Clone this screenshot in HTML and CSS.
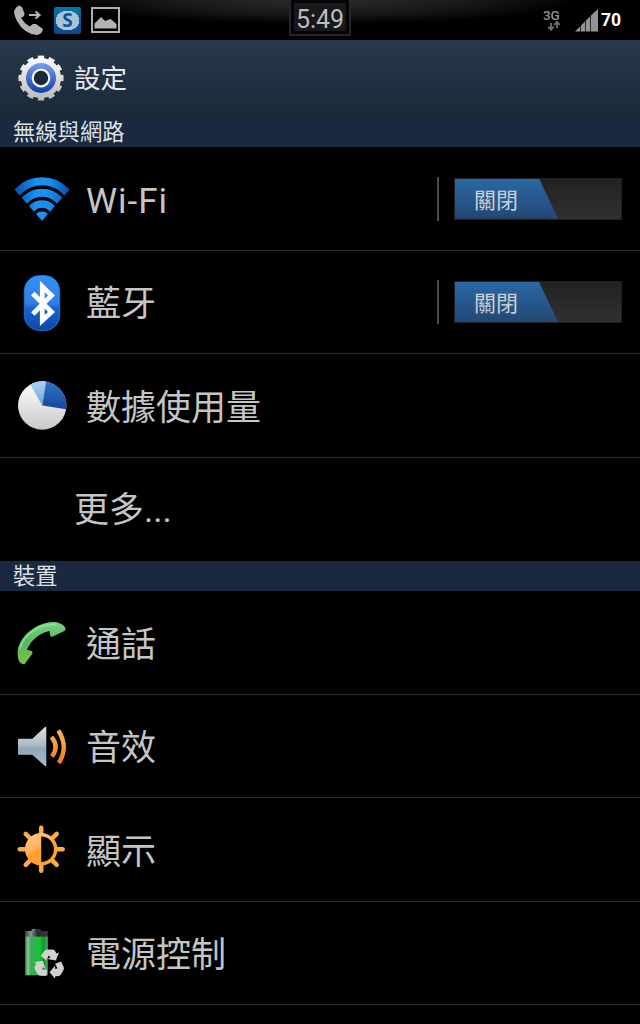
FILE: index.html
```
<!doctype html>
<html lang="zh-Hant">
  <head>
    <meta charset="UTF-8" />
    <meta name="viewport" content="width=device-width, initial-scale=1.0" />
    <title>設定</title>
    <link rel="stylesheet" href="styles.css">
  </head>
  <body>
    <div class="status-bar">
      <div class="notifications">
        <svg width="30" height="32" viewBox="0 0 30 32">
          <path d="M0.500 6 Q2 2.500 5 1.500 L8 3 L10.500 9.500 L10 12 L7 14 Q10 19 15.500 22.500 L19 20 L22 20 L29 25 L28 28 Q26 31 23 31 Q10 30 3 17 Q-1 9 0.500 6Z" fill="#b2b4b2" />
          <path d="M15 11 H25 M21.500 7.500 L25.500 11 L21.500 14.500" fill="none" stroke="#b2b4b2" stroke-width="2.200" />
        </svg>
        <div class="app-badge"><span>S</span></div>
        <svg width="29" height="26" viewBox="0 0 29 26">
          <rect x="1" y="1" width="27" height="24" fill="none" stroke="#aeb0ae" stroke-width="2" />
          <path d="M3.500 21.500 V16.500 L10 10 L14 14 L19.500 12 L25.500 17 V21.500Z" fill="#b2b4b2" />
        </svg>
      </div>
      <div class="clock">5:49</div>
      <div class="indicators">
        <div class="network">
          <span>3G</span>
          <svg width="14" height="10" viewBox="0 0 14 10">
            <path d="M4 2 V8 M1.200 5.500 L4 8.800 L6.800 5.500 M10 7 V1 M7.200 4 L10 0.800 L12.800 4" fill="none" stroke="#707070" stroke-width="1.800" />
          </svg>
        </div>
        <svg class="signal" width="24" height="23" viewBox="0 0 24 23">
          <path d="M0 22.500 L5 17.500 V22.500Z M5.700 22.500 V16.800 L10 12.500 V22.500Z M10.700 22.500 V11.800 L15 7.500 V22.500Z M15.700 22.500 V6.800 L23 0 V22.500Z" fill="#939393" />
        </svg>
        <span class="battery-level">70</span>
      </div>
    </div>

    <header class="header">
      <svg width="48" height="48" viewBox="-24 -24 48 48">
        <defs>
          <linearGradient id="gearBody" x1="0" y1="-22" x2="0" y2="22" gradientUnits="userSpaceOnUse">
            <stop offset="0" stop-color="#fff" />
            <stop offset="1" stop-color="#b9b9b9" />
          </linearGradient>
          <linearGradient id="gearRing" x1="0" y1="-16" x2="0" y2="16" gradientUnits="userSpaceOnUse">
            <stop offset="0" stop-color="#7ba0f5" />
            <stop offset="1" stop-color="#0b3ca4" />
          </linearGradient>
        </defs>
        <circle r="17.200" fill="none" stroke="url(#gearBody)" stroke-width="5.800" />
        <circle r="20.500" fill="none" stroke="url(#gearBody)" stroke-width="4.200" pathLength="120" stroke-dasharray="5.800 4.200" stroke-dashoffset="2.900" />
        <circle r="12" fill="none" stroke="url(#gearRing)" stroke-width="6" />
        <circle r="8.300" fill="#1c2836" stroke="#f4f4f4" stroke-width="2.200" />
      </svg>
      <h1>設定</h1>
    </header>

    <h2 class="category">無線與網路</h2>
    <ul class="list">
      <li class="row">
        <svg class="icon" viewBox="0 0 60 60">
          <defs>
            <linearGradient id="wifiBlue" x1="2" y1="0" x2="58" y2="0" gradientUnits="userSpaceOnUse">
              <stop offset="0" stop-color="#064ba4" />
              <stop offset=".4" stop-color="#1b93f4" />
              <stop offset=".65" stop-color="#168cf0" />
              <stop offset="1" stop-color="#064da8" />
            </linearGradient>
            <clipPath id="wifiWedge"><path d="M30 52.800 L-10 7.500 H70Z" /></clipPath>
          </defs>
          <g clip-path="url(#wifiWedge)" fill="none" stroke="url(#wifiBlue)">
            <circle cx="30" cy="46.500" r="33.300" stroke-width="7.900" />
            <circle cx="30" cy="48.300" r="23.600" stroke-width="8" />
            <circle cx="30" cy="50" r="14" stroke-width="7.600" />
            <circle cx="30" cy="51.700" r="8.300" fill="#1b93f4" stroke="none" />
          </g>
        </svg>
        <span class="label latin">Wi-Fi</span>
        <div class="switch"><span>關閉</span></div>
      </li>
      <li class="row short">
        <svg class="icon" viewBox="0 0 60 60">
          <defs>
            <linearGradient id="btBlue" x1="0" y1="0" x2="0" y2="1">
              <stop offset="0" stop-color="#3491f4" />
              <stop offset=".5" stop-color="#2f80e6" />
              <stop offset=".6" stop-color="#1863cf" />
              <stop offset="1" stop-color="#10479f" />
            </linearGradient>
          </defs>
          <rect x="12.300" y="3.500" width="35.400" height="55" rx="15" fill="url(#btBlue)" stroke="#1e74cf" />
          <path d="M20.800 21.500 L39.500 40 L30.300 48.500 V14.500 L39.500 23.500 L20.800 42" fill="none" stroke="#fff" stroke-width="4.800" />
        </svg>
        <span class="label">藍牙</span>
        <div class="switch"><span>關閉</span></div>
      </li>
      <li class="row">
        <svg class="icon" viewBox="0 0 60 60">
          <defs>
            <linearGradient id="pieGray" x1="0" y1="0" x2="0" y2="1">
              <stop offset="0" stop-color="#fff" />
              <stop offset="1" stop-color="#c9c9c9" />
            </linearGradient>
            <linearGradient id="pieBlue" x1="0" y1="0" x2="0" y2="1">
              <stop offset="0" stop-color="#2f74cc" />
              <stop offset="1" stop-color="#164798" />
            </linearGradient>
            <linearGradient id="pieLight" x1="0" y1="0" x2="0" y2="1">
              <stop offset="0" stop-color="#abd4f3" />
              <stop offset="1" stop-color="#6da0d6" />
            </linearGradient>
          </defs>
          <circle cx="30.200" cy="30.500" r="24.200" fill="url(#pieGray)" />
          <path d="M30.300 30.500 L18.300 9.500 A24.200 24.200 0 0 1 34 6.600Z" fill="url(#pieLight)" />
          <path d="M30.300 30.500 L34 6.600 A24.200 24.200 0 0 1 54.200 34.200Z" fill="url(#pieBlue)" />
        </svg>
        <span class="label">數據使用量</span>
      </li>
      <li class="row short more">
        <span class="label">更多...</span>
      </li>
    </ul>

    <h2 class="category">裝置</h2>
    <ul class="list">
      <li class="row">
        <svg class="icon" viewBox="0 0 60 60">
          <defs>
            <linearGradient id="callGreen" x1="0" y1="0" x2="0" y2="1">
              <stop offset="0" stop-color="#74d380" />
              <stop offset=".5" stop-color="#58b860" />
              <stop offset="1" stop-color="#7fc343" />
            </linearGradient>
          </defs>
          <path d="M6.500 48 Q4 38 8 31 Q12 22.500 21.300 16.500 Q31 10 41.300 10 Q49 10 53.300 15.500 V18.500 Q47 21.500 40 25 L38.300 24 L37.500 19 Q22 22.500 14.800 37.800 L20 39 L20.500 41.500 L12.500 52.300 Q8.500 52.500 6.500 48Z" fill="url(#callGreen)" />
          <path d="M8 37 Q11 25 21 19 Q31 12 44 12.500" fill="none" stroke="#a5e8ac" stroke-width="1.800" opacity=".6" />
        </svg>
        <span class="label">通話</span>
      </li>
      <li class="row short">
        <svg class="icon" viewBox="0 0 60 60">
          <defs>
            <linearGradient id="speaker" x1="0" y1="0" x2="0" y2="1">
              <stop offset="0" stop-color="#dde2e5" />
              <stop offset=".48" stop-color="#aab9c5" />
              <stop offset=".55" stop-color="#91a8b9" />
              <stop offset="1" stop-color="#a9bdcb" />
            </linearGradient>
            <linearGradient id="wave" x1="0" y1="14" x2="0" y2="48" gradientUnits="userSpaceOnUse">
              <stop offset="0" stop-color="#ffb45c" />
              <stop offset="1" stop-color="#f47c12" />
            </linearGradient>
          </defs>
          <path d="M7 22.700 H20.300 L33 11 Q34.300 10.200 34.300 12 V49.500 Q34.300 51 33 50 L20.300 38.800 H7 Q6 38.800 6 37.500 V24 Q6 22.700 7 22.700Z" fill="url(#speaker)" />
          <path d="M39.500 21 Q47.500 30.500 40 40.500 M46.300 14.500 Q57 31 46.800 47" fill="none" stroke="url(#wave)" stroke-width="4.400" />
        </svg>
        <span class="label">音效</span>
      </li>
      <li class="row">
        <svg class="icon" viewBox="0 0 60 60">
          <defs>
            <linearGradient id="sun" x1="10" y1="8" x2="35" y2="54" gradientUnits="userSpaceOnUse">
              <stop offset="0" stop-color="#ffce94" />
              <stop offset=".45" stop-color="#ffb560" />
              <stop offset=".55" stop-color="#ffa031" />
              <stop offset="1" stop-color="#ffa336" />
            </linearGradient>
          </defs>
          <g transform="translate(29.200 30.300)" stroke="#ffaa48" stroke-width="4.500" stroke-linecap="round">
            <path d="M0 -21.500 V-16 M0 21.500 V16 M-21.500 0 H-16 M21.500 0 H16 M-15.500 -15.500 L-11 -11 M15.500 -15.500 L11 -11 M-15.500 15.500 L-11 11 M15.500 15.500 L11 11" />
          </g>
          <circle cx="29.200" cy="30.300" r="14.500" fill="#000" stroke="url(#sun)" stroke-width="3.500" />
          <path d="M29.200 15.500 A14.800 14.800 0 0 0 29.200 45.100Z" fill="url(#sun)" />
        </svg>
        <span class="label">顯示</span>
      </li>
      <li class="row short">
        <svg class="icon" viewBox="0 0 60 60">
          <defs>
            <linearGradient id="cell" x1="0" y1="0" x2="1" y2="0">
              <stop offset="0" stop-color="#157334" />
              <stop offset=".12" stop-color="#8fc79c" />
              <stop offset=".25" stop-color="#3faa5c" />
              <stop offset=".65" stop-color="#12c436" />
              <stop offset=".85" stop-color="#079b26" />
              <stop offset="1" stop-color="#7f9a82" />
            </linearGradient>
            <linearGradient id="cap" x1="0" y1="0" x2="1" y2="0">
              <stop offset="0" stop-color="#363a3d" />
              <stop offset=".25" stop-color="#8b9094" />
              <stop offset=".55" stop-color="#25282a" />
              <stop offset="1" stop-color="#3a3d40" />
            </linearGradient>
          </defs>
          <rect x="19" y="6" width="10" height="4" rx="1.500" fill="url(#cap)" />
          <rect x="13" y="8" width="22.700" height="6.500" rx="1" fill="url(#cap)" />
          <rect x="13" y="13.700" width="22.700" height="38.600" fill="url(#cell)" />
          <g transform="translate(37.400 41.500)" fill="#d0d1d0">
            <path id="arrow" d="M-8.500 -8.500 L-5.500 -13 Q-4.500 -15 -2 -15 H3 Q5 -15 6 -13 L7 -11 L9.500 -12 L6.500 -4 L-2 -5.500 L1 -7 L-0.500 -9 L-3.500 -4.600Z" />
            <use href="#arrow" transform="rotate(120)" />
            <use href="#arrow" transform="rotate(240)" />
          </g>
        </svg>
        <span class="label">電源控制</span>
      </li>
    </ul>
  </body>
</html>
```
FILE: styles.css
```
* {
  box-sizing: border-box;
}

body {
  margin: 0;
  height: 1024px;
  overflow: hidden;
  background-color: #000;
  color: #c5c5c5;
  font-family: Roboto, "Noto Sans CJK TC", sans-serif;
}

.status-bar {
  display: grid;
  grid-template-columns: 1fr 62px 1fr;
  height: 40px;
  background: radial-gradient(ellipse 260px 24px at 50% 0, #2c2c2c, #171717 60%, #000);
}

.notifications {
  display: flex;
  align-items: center;
  gap: 10px;
  padding-left: 14px;
}

.app-badge {
  display: flex;
  align-items: center;
  justify-content: center;
  width: 27px;
  height: 27px;
  border-radius: 2px;
  background: radial-gradient(ellipse 12px 10px, #a9c5d4 97%, transparent), linear-gradient(#0a75a6, #0b4591);
}

.app-badge span {
  color: #0a559c;
  font: bold 19px/19px "Open Sans", sans-serif;
}

.clock {
  height: 36px;
  border: 2px solid #262626;
  border-top: 0;
  box-shadow: inset 0 0 0 3px #050505;
  background-color: #17181b;
  color: #bdbdbd;
  font-size: 25px;
  line-height: 39px;
  text-align: center;
}

.indicators {
  display: flex;
  align-items: center;
  justify-content: flex-end;
  padding-right: 19px;
}

.network {
  display: flex;
  flex-direction: column;
  width: 19px;
  margin-right: 13px;
  color: #929292;
  font-size: 13.5px;
  font-weight: 500;
  line-height: 12px;
}

.network svg {
  margin-left: 4px;
}

.signal {
  margin-right: 2px;
}

.battery-level {
  color: #fff;
  font-size: 17.5px;
  font-weight: 700;
  line-height: 40px;
}

.header {
  display: flex;
  align-items: center;
  gap: 9px;
  height: 77px;
  padding-left: 17px;
  padding-bottom: 1px;
  background: linear-gradient(#29394f, #1a2936);
}

.header h1 {
  margin: 0;
  padding-top: 2px;
  color: #e6e9ec;
  font-size: 26.5px;
  font-weight: 400;
  line-height: 38px;
}

.category {
  height: 30px;
  margin: 0;
  padding-left: 13px;
  background-color: #1a2940;
  color: #dde0e4;
  font-size: 22.3px;
  font-weight: 400;
  line-height: 31px;
}

.list {
  margin: 0;
  padding: 0;
  list-style: none;
}

.row {
  display: flex;
  align-items: center;
  height: 104px;
  padding: 0 18px 0 12px;
  border-bottom: 1px solid #303030;
}

.row.short {
  height: 103px;
}

.row.more {
  padding-left: 74px;
  border-bottom: 0;
}

.icon {
  align-self: flex-start;
  width: 60px;
  height: 60px;
  margin: 21px 14px 0 0;
}

.label {
  flex: 1;
  padding-top: 6px;
  font-size: 35px;
  line-height: 50px;
}

.label.latin {
  letter-spacing: 1px;
}

.row.more .label {
  padding-top: 2px;
}

.switch {
  height: 44px;
  padding: 1px 0 1px 15px;
  border-left: 2px solid #4c4c4c;
}

.switch span {
  display: block;
  width: 168px;
  height: 42px;
  padding-left: 19px;
  border: 1px solid #202020;
  background: linear-gradient(#222, #303030);
  color: #c9ced4;
  font-size: 22px;
  line-height: 43px;
  position: relative;
  z-index: 0;
}

.switch span::before {
  content: "";
  position: absolute;
  inset: 0 auto 0 0;
  z-index: -1;
  width: 103px;
  background: linear-gradient(#2a68a4, #234875);
  clip-path: polygon(0 0, 84px 0, 100% 100%, 0 100%);
}
```
